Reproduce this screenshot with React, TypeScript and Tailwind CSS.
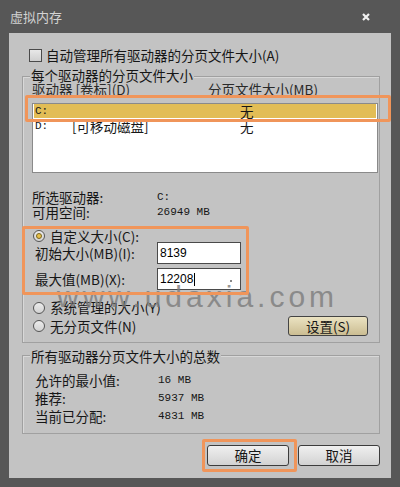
const cjk = "font-[family-name:'Noto_Sans_CJK_SC',sans-serif]";
const mono = "font-[family-name:'Liberation_Mono',monospace] text-[11px]";

function Radio({ checked }: { checked?: boolean }) {
  return (
    <span className="flex h-[12px] w-[12px] items-center justify-center rounded-full border border-[#555] bg-linear-to-b from-[#ececec] to-[#d2d2d2]">
      {checked && <span className="h-[6px] w-[6px] rounded-full border border-[#7a6520] bg-[#e8c14a]" />}
    </span>
  );
}

function Field({ value, caret }: { value: string; caret?: boolean }) {
  return (
    <div className="relative flex h-[22px] w-[84px] items-center border border-[#4a4a4a] bg-white pl-[2px] font-[family-name:'Liberation_Sans',sans-serif] text-[12px] text-black">
      {value}
      {caret && <span className="ml-[1px] h-[13px] w-[1px] bg-black" />}
      {caret && <span className="absolute right-[8px] bottom-[7px] h-[2px] w-[2px] bg-[#888]" />}
    </div>
  );
}

export default function App() {
  return (
    <div className={`relative h-[487px] w-[400px] overflow-hidden bg-[#575757] ${cjk}`}>
      <div className="flex h-[33px] items-center justify-between pr-[30px] pl-[10px]">
        <span className="text-[13px] text-[#d2d2d2]">虚拟内存</span>
        <svg width="8" height="8" viewBox="0 0 8 8">
          <path d="M1 1 L7 7 M7 1 L1 7" stroke="#f2f2f2" strokeWidth="2.2" />
        </svg>
      </div>

      <div className="mx-[9px] flex h-[445px] flex-col bg-[#c3c3c3] text-[13.5px] text-[#161616]">
        <div className="mt-[16px] ml-[20px] flex h-[13px] items-center">
          <span className="h-[13px] w-[13px] border border-[#4a4a4a] bg-linear-to-b from-[#e8e8e8] to-[#cfcfcf]" />
          <span className="ml-[4px] leading-[15px]">自动管理所有驱动器的分页文件大小(A)</span>
        </div>

        <div className="mt-[14px] mr-[11px] ml-[13px] border border-[#a0a0a0] pb-[6px] pl-[9px] shadow-[inset_1px_1px_0_#d8d8d8]">
          <div className="-mt-[10px] -ml-[2px] w-fit bg-[#c3c3c3] px-[1px] leading-[16px]">每个驱动器的分页文件大小</div>
          <div className="flex leading-[13px] text-[#2a2a2a]">
            <span className="w-[176px]">驱动器 [卷标](D)</span>
            <span>分页文件大小(MB)</span>
          </div>
          <div className="mt-[7px] mr-[1px] h-[70px] border border-[#8a8a8a] bg-white">
            <div className="mx-[1px] flex h-[14px] items-center bg-[#e2bd56] leading-[14px]">
              <span className={`w-[206px] pl-[1px] ${mono}`}>C:</span>
              <span>无</span>
            </div>
            <div className="mx-[1px] flex h-[16px] items-center leading-[14px]">
              <span className={`w-[38px] pl-[1px] ${mono}`}>D:</span>
              <span className="w-[168px]">[可移动磁盘]</span>
              <span>无</span>
            </div>
          </div>

          <div className="mt-[17px] grid grid-cols-[125px_1fr] leading-[15px]">
            <span>所选驱动器:</span>
            <span className={mono}>C:</span>
            <span>可用空间:</span>
            <span className={mono}>26949 MB</span>
          </div>

          <div className="mt-[10px] flex h-[12px] items-center pl-[1px]">
            <Radio checked />
            <span className="ml-[5px] leading-[15px]">自定义大小(C):</span>
          </div>
          <div className="flex h-[22px] items-center">
            <span className="w-[125px] pl-[3px]">初始大小(MB)(I):</span>
            <Field value="8139" />
          </div>
          <div className="mt-[4px] flex h-[22px] items-center">
            <span className="w-[125px] pl-[3px]">最大值(MB)(X):</span>
            <Field value="12208" caret />
          </div>

          <div className="mt-[10px] flex h-[15px] items-center pl-[1px]">
            <Radio />
            <span className="ml-[5px]">系统管理的大小(Y)</span>
          </div>
          <div className="mt-[1px] flex h-[20px] items-center justify-between pr-[11px] pl-[1px]">
            <div className="flex items-center">
              <Radio />
              <span className="ml-[5px]">无分页文件(N)</span>
            </div>
            <button className="h-[20px] w-[80px] rounded-[3px] border border-[#444] bg-linear-to-b from-[#ebe3c2] to-[#cbbd92] leading-[18px]">
              设置(S)
            </button>
          </div>
        </div>

        <div className="mt-[12px] mr-[11px] ml-[13px] border border-[#a0a0a0] pb-[8px] pl-[12px] shadow-[inset_1px_1px_0_#d8d8d8]">
          <div className="-mt-[8px] -ml-[5px] w-fit bg-[#c3c3c3] px-[1px] leading-[16px]">所有驱动器分页文件大小的总数</div>
          <div className="mt-[7px] grid grid-cols-[123px_1fr] leading-[18px]">
            <span>允许的最小值:</span>
            <span className={mono}>16 MB</span>
            <span>推荐:</span>
            <span className={mono}>5937 MB</span>
            <span>当前已分配:</span>
            <span className={mono}>4831 MB</span>
          </div>
        </div>

        <div className="mt-[11px] flex justify-end gap-[9px] pr-[11px]">
          <button className="h-[21px] w-[82px] rounded-[3px] border border-[#3c3c3c] bg-linear-to-b from-[#f0f0f0] to-[#d2d2d2] leading-[19px]">
            确定
          </button>
          <button className="h-[21px] w-[82px] rounded-[3px] border border-[#3c3c3c] bg-linear-to-b from-[#f0f0f0] to-[#d2d2d2] leading-[19px]">
            取消
          </button>
        </div>
      </div>

      <div className="pointer-events-none absolute top-[282px] left-[57px] font-[family-name:'Liberation_Sans',sans-serif] text-[30px] leading-none tracking-[4px] text-[#7c7c7c] opacity-80">
        www.udaxia.com
      </div>

      <div className="pointer-events-none absolute top-[95px] left-[25px] h-[27px] w-[366px] rounded-[2px] border-[3px] border-[#f0955a]" />
      <div className="pointer-events-none absolute top-[226px] left-[22px] h-[69px] w-[227px] rounded-[2px] border-[3px] border-[#f0955a]" />
      <div className="pointer-events-none absolute top-[439px] left-[202px] h-[33px] w-[95px] rounded-[2px] border-[3px] border-[#f0955a]" />
    </div>
  );
}
